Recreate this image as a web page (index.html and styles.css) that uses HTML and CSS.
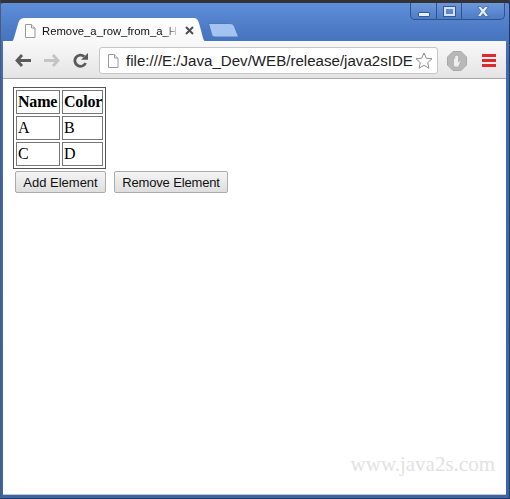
FILE: index.html
```html
<!DOCTYPE html>
<html lang="en">
<head>
    <meta charset="UTF-8">
    <title>Remove_a_row_from_a_H</title>
    <link rel="stylesheet" href="styles.css">
</head>
<body>
    <div class="window">
        <div class="titlebar">
            <div class="caption-buttons">
                <div class="caption-btn btn-min"><span class="min-glyph"></span></div>
                <div class="caption-btn btn-max"><span class="max-glyph"></span></div>
                <div class="caption-btn btn-close">
                    <svg width="14" height="11" viewBox="0 0 14 11"><path d="M1.500.5h3.300L7 3l2.200-2.500h3.300L9 5.300l3.700 5.200H9.300L7 7.600l-2.300 2.900H1.300L5 5.300z" fill="#e8eef8" stroke="#2f5b9e" stroke-width="0.700"/></svg>
                </div>
            </div>
            <div class="tabstrip">
                <div class="tab">
                    <svg class="tab-shape" width="198" height="24" viewBox="0 0 198 24"><defs><linearGradient id="tabfill" x1="0" y1="0" x2="0" y2="1"><stop offset="0" stop-color="#ffffff"/><stop offset="1" stop-color="#f8f8f8"/></linearGradient></defs><path d="M0 24c2 0 3-1 4-4l4-14c1-4 3-6 7-6h168c4 0 5 2 6 5l4 15c1 3 2 4 5 4z" fill="url(#tabfill)"/></svg>
                    <svg class="tab-page" width="12" height="14" viewBox="0 0 12 14"><path d="M1.500.5h6l3.500 3.500v9.500h-9.500z" fill="#fff" stroke="#9a9a9a"/><path d="M7.500.5v3.500h3.500" fill="#eee" stroke="#9a9a9a"/></svg>
                    <span class="tab-title">Remove_a_row_from_a_H</span>
                    <svg class="tab-close" width="9" height="9" viewBox="0 0 9 9"><path d="M1 1l7 7M8 1l-7 7" fill="none" stroke="#4f4f4f" stroke-width="2"/></svg>
                </div>
                <svg class="new-tab" width="32" height="15" viewBox="0 0 32 15"><path d="M1.500.5h21c3 0 4 1 5 3l3.500 9c.500 1 0 1.500-1.500 1.500H8c-2 0-3-1-3.500-3z" fill="#a3c4f0" stroke="#4a78bb"/></svg>
            </div>
        </div>
        <div class="toolbar">
            <svg class="nav-icon" width="16" height="13" viewBox="0 0 16 13"><path d="M7 1 2 6.500l5 5.500M2.500 6.500H16" fill="none" stroke="#5a5a5a" stroke-width="2.800"/></svg>
            <svg class="nav-icon" width="16" height="13" viewBox="0 0 16 13"><path d="M9 1l5 5.500L9 12M13.500 6.500H0" fill="none" stroke="#c4c4c4" stroke-width="2.800"/></svg>
            <svg class="nav-icon reload" width="15" height="15" viewBox="0 0 15 15"><path d="M12.600 10A5.600 5.600 0 1 1 11.200 3.500" fill="none" stroke="#5a5a5a" stroke-width="2.800"/><path d="M8 6.800h7V0z" fill="#5a5a5a"/></svg>
            <div class="omnibox">
                <svg class="omni-page" width="12" height="14" viewBox="0 0 12 14"><path d="M1.500.5h6l3.500 3.500v9.500h-9.500z" fill="#fff" stroke="#9a9a9a"/><path d="M7.500.5v3.500h3.500" fill="#eee" stroke="#9a9a9a"/></svg>
                <span class="url">file:///E:/Java_Dev/WEB/release/java2sIDE</span>
                <svg class="star" width="18" height="17" viewBox="0 0 18 17"><path d="M9 1l2.300 5.200 5.700.600-4.300 3.800 1.200 5.600L9 13.300l-4.900 2.900 1.200-5.600L1 6.800l5.700-.600z" fill="#fff" stroke="#8e8e8e"/></svg>
            </div>
            <svg class="ext-icon" width="20" height="20" viewBox="0 0 20 20"><path d="M6 .5h8L19.500 6v8L14 19.500H6L.5 14V6z" fill="#b8b8b8" stroke="#a8a8a8"/><path d="M6.500 14.500V7.500c0-1 1.200-1 1.200 0V5c0-1 1.300-1 1.300 0v-.500c0-1 1.300-1 1.300 0V5c0-1 1.200-1 1.200 0v6l1.200-1.500c.700-.800 1.600 0 1 .800L11.500 16H8z" fill="#eee" stroke="#999" stroke-width=".5"/></svg>
            <div class="menu-icon"><span></span><span></span><span></span></div>
        </div>
        <div class="page">
            <table class="demo-table">
                <tr><th>Name</th><th>Color</th></tr>
                <tr><td>A</td><td>B</td></tr>
                <tr><td>C</td><td>D</td></tr>
            </table>
            <div class="actions">
                <button class="action-btn add-btn">Add Element</button>
                <button class="action-btn remove-btn">Remove Element</button>
            </div>
            <div class="watermark">www.java2s.com</div>
        </div>
    </div>
</body>
</html>
```

FILE: styles.css
```css
* {
    box-sizing: border-box;
}

html, body {
    margin: 0;
    padding: 0;
    background-color: #2a3f63;
}

.window {
    width: 510px;
    height: 499px;
    display: flex;
    flex-direction: column;
    padding: 0 3px 3px 2px;
    background: linear-gradient(to bottom, #5f8edb 0, #4a78c2 30px, #3f6ab3 60px, #3c64ac 100%);
    border-top: 3px solid #333;
    border-right: 1px solid #27395c;
    border-bottom: 1px solid #27395c;
    border-left: 1px solid #4a5a78;
    border-radius: 4px 4px 0 0;
}

.titlebar {
    height: 38px;
    position: relative;
    z-index: 1;
    flex-shrink: 0;
}

.caption-buttons {
    position: absolute;
    top: 0;
    right: 1px;
    display: flex;
    height: 17px;
    border: 1px solid #2f5288;
    border-top: none;
    border-radius: 0 0 5px 5px;
    background: linear-gradient(to bottom, #6d97da, #4d7cc6);
}

.caption-btn {
    display: flex;
    align-items: center;
    justify-content: center;
    border-left: 1px solid #2f5288;
}

.btn-min {
    width: 25px;
    border-left: none;
}

.btn-max {
    width: 25px;
}

.btn-close {
    width: 43px;
}

.min-glyph {
    width: 12px;
    height: 5px;
    margin-top: 6px;
    background-color: #e8eef8;
    border: 1px solid #2f5b9e;
    border-radius: 1px;
}

.max-glyph {
    width: 11px;
    height: 9px;
    border: 2px solid #d8e2f4;
    outline: 1px solid #2f5b9e;
}

.tabstrip {
    position: absolute;
    left: 7px;
    bottom: -1px;
    display: flex;
    align-items: flex-end;
}

.tab {
    position: relative;
    width: 198px;
    height: 24px;
    display: flex;
    align-items: center;
    padding: 1px 0 0 14px;
    font-family: "Liberation Sans", Arial, sans-serif;
    font-size: 11.3px;
}

.tab-shape {
    position: absolute;
    left: 0;
    top: 0;
}

.tab-page {
    position: relative;
    flex-shrink: 0;
    margin-right: 6px;
}

.tab-title {
    position: relative;
    width: 137px;
    white-space: nowrap;
    color: #111;
    -webkit-mask-image: linear-gradient(to right, #000 122px, transparent 137px);
    mask-image: linear-gradient(to right, #000 122px, transparent 137px);
}

.tab-close {
    position: relative;
    flex-shrink: 0;
    margin-left: 6px;
}

.new-tab {
    margin: 0 0 4px -1px;
}

.toolbar {
    height: 38px;
    flex-shrink: 0;
    display: flex;
    align-items: center;
    padding: 2px 0 0 12px;
    background: linear-gradient(to bottom, #f9f9f9, #e4e4e4);
    border-bottom: 1px solid #a8a8a8;
}

.nav-icon {
    flex-shrink: 0;
    margin-right: 13px;
}

.reload {
    margin-right: 11px;
}

.omnibox {
    width: 339px;
    height: 27px;
    display: flex;
    align-items: center;
    padding-left: 7px;
    background-color: #fff;
    border: 1px solid #c6c6c6;
    border-radius: 3px;
}

.omni-page {
    flex-shrink: 0;
    margin-right: 7px;
}

.url {
    width: 289px;
    white-space: nowrap;
    font-family: "Liberation Sans", Arial, sans-serif;
    font-size: 15.1px;
    color: #222;
}

.star {
    flex-shrink: 0;
}

.ext-icon {
    flex-shrink: 0;
    margin-left: 9px;
}

.menu-icon {
    margin-left: 15px;
    display: flex;
    flex-direction: column;
    gap: 2px;
}

.menu-icon span {
    display: block;
    width: 14px;
    height: 3px;
    background-color: #e0292e;
}

.page {
    flex: 1;
    position: relative;
    padding: 8px 10px;
    background-color: #fff;
    border-bottom: 1px solid #c8c8c8;
    font-family: "Liberation Serif", "Times New Roman", serif;
    font-size: 16px;
    color: #000;
}

.demo-table {
    width: 93px;
    table-layout: fixed;
    border: 1px solid #555;
    border-spacing: 2px;
}

.demo-table th,
.demo-table td {
    height: 24px;
    border: 1px solid #777;
    padding: 1px;
    text-align: left;
}

.demo-table th {
    letter-spacing: -0.2px;
}

.demo-table th:first-child {
    width: 44px;
}

.actions {
    display: flex;
    gap: 8px;
    padding: 2px 0 0 2px;
}

.action-btn {
    height: 22px;
    padding: 0;
    font-family: "Liberation Sans", Arial, sans-serif;
    font-size: 13px;
    color: #111;
    background: linear-gradient(to bottom, #f4f4f4, #dedede);
    border: 1px solid #acacac;
    border-radius: 2px;
}

.add-btn {
    width: 91px;
}

.remove-btn {
    width: 114px;
    letter-spacing: -0.15px;
}

.watermark {
    position: absolute;
    right: 11px;
    bottom: 17px;
    font-size: 21px;
    color: #e2e2e2;
}
```
